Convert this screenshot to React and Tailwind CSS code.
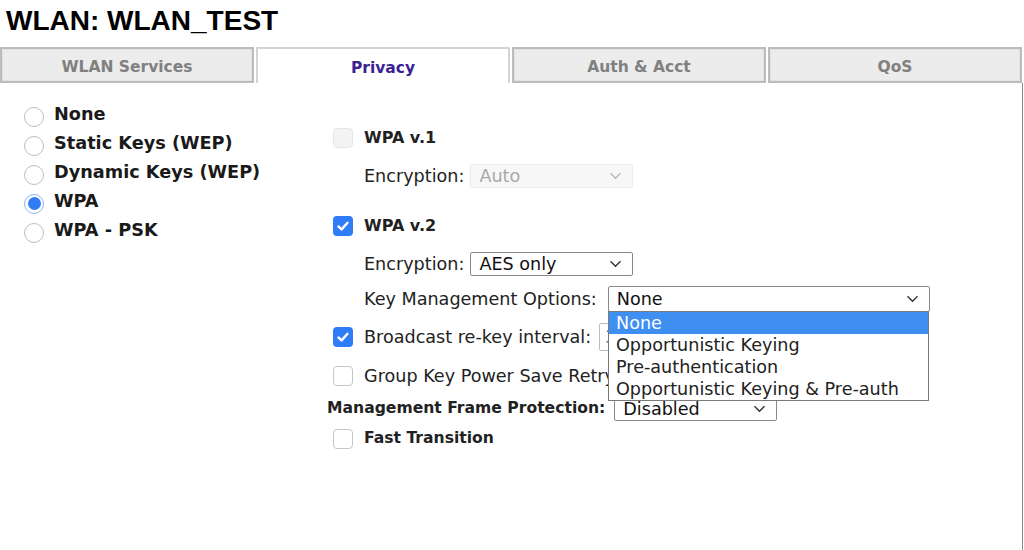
import React from "react";

const Chevron = ({ className = "" }) => (
  <svg viewBox="0 0 12 8" className={`w-[13px] h-[8px] ${className}`} fill="none" stroke="currentColor" strokeWidth="1.4">
    <path d="M1 1.2 L6 6.2 L11 1.2" />
  </svg>
);

const Radio = ({ checked }) =>
  checked ? (
    <span className="block w-[20px] h-[20px] rounded-full border border-[#8fb4f5] bg-white flex items-center justify-center shrink-0">
      <span className="block w-[13px] h-[13px] rounded-full bg-[#2f7cf6]" />
    </span>
  ) : (
    <span className="block w-[20px] h-[20px] rounded-full border border-[#bdbdbd] bg-white shrink-0" />
  );

const Checkbox = ({ checked, disabled }) => {
  if (checked)
    return (
      <span className="w-[20px] h-[20px] rounded-[4px] bg-[#2f7cf6] flex items-center justify-center shrink-0">
        <svg viewBox="0 0 14 14" className="w-[14px] h-[14px]" fill="none" stroke="white" strokeWidth="2.4" strokeLinecap="round" strokeLinejoin="round">
          <path d="M2.5 7.5 L5.6 10.4 L11.5 3.8" />
        </svg>
      </span>
    );
  if (disabled) return <span className="block w-[20px] h-[20px] rounded-[4px] border border-[#e6e6e6] bg-[#f3f3f3] shrink-0" />;
  return <span className="block w-[20px] h-[20px] rounded-[4px] border border-[#c6c6c6] bg-white shrink-0" />;
};

const Select = ({ value, width, disabled, height = "h-[24px]" }) => (
  <div
    className={`${width} ${height} shrink-0 flex items-center justify-between pl-[8px] pr-[10px] rounded-[2px] border ${
      disabled ? "border-[#ececec] bg-[#f7f7f7] text-[#a8a8a8]" : "border-[#8a8a8a] bg-white text-[#111]"
    }`}
  >
    <span>{value}</span>
    <Chevron className={disabled ? "text-[#b8b8b8]" : "text-[#333]"} />
  </div>
);

const tabs = ["WLAN Services", "Privacy", "Auth & Acct", "QoS"];

const privacyModes = [
  { label: "None" },
  { label: "Static Keys (WEP)" },
  { label: "Dynamic Keys (WEP)" },
  { label: "WPA", checked: true },
  { label: "WPA - PSK" },
];

const keyOptions = ["None", "Opportunistic Keying", "Pre-authentication", "Opportunistic Keying & Pre-auth"];

export default function App() {
  return (
    <div className="w-[1024px] h-[550px] bg-white overflow-hidden flex flex-col font-['DejaVu_Sans',Verdana,sans-serif] text-[17.6px] text-[#222]">
      {/* Title */}
      <h1 className="h-[47px] pl-[6px] pt-[5px] font-['Liberation_Sans',Arial,sans-serif] font-bold text-[28px] leading-[32px] text-black">
        WLAN: WLAN_TEST
      </h1>

      {/* Tabs */}
      <div className="flex gap-[2px] pr-[2px] h-[36px]">
        {tabs.map((t) => {
          const active = t === "Privacy";
          return (
            <div
              key={t}
              className={`flex-1 flex items-center justify-center pt-[5px] font-bold text-[15.5px] border-2 ${
                active
                  ? "bg-white border-[#d4d4d4] border-b-0 text-[#3d1f94]"
                  : "bg-[#ececec] border-[#bcbcbc] text-[#808080] shadow-[inset_0_0_0_1px_#e2e2e2]"
              }`}
            >
              {t}
            </div>
          );
        })}
      </div>

      {/* Panel */}
      <div className="flex-1 flex border-r border-[#8c8c8c] mr-[1px]">
        {/* Left: privacy mode */}
        <div className="w-[327px] pl-[24px] pt-[17px] flex flex-col font-bold text-[17.7px]">
          {privacyModes.map((m) => (
            <div key={m.label} className="h-[29px] flex items-center gap-[10px]">
              <span className="mt-[4px]">
                <Radio checked={m.checked} />
              </span>
              <span className="text-[#1a1a1a]">{m.label}</span>
            </div>
          ))}
        </div>

        {/* Right: WPA settings */}
        <div className="relative flex-1 flex flex-col pt-[40px]">
          <div className="h-[30px] flex items-center gap-[11px] pl-[6px]">
            <Checkbox disabled />
            <span className="font-bold text-[16px]">WPA v.1</span>
          </div>
          <div className="mt-[11px] h-[24px] flex items-center gap-[6px] pl-[37px]">
            <span>Encryption:</span>
            <Select value="Auto" width="w-[163px]" disabled />
          </div>

          <div className="mt-[25px] h-[26px] flex items-center gap-[11px] pl-[6px]">
            <Checkbox checked />
            <span className="font-bold text-[16px]">WPA v.2</span>
          </div>
          <div className="mt-[13px] h-[24px] flex items-center gap-[6px] pl-[37px]">
            <span>Encryption:</span>
            <Select value="AES only" width="w-[163px]" />
          </div>

          <div className="mt-[10px] h-[26px] flex items-center gap-[11px] pl-[37px]">
            <span>Key Management Options:</span>
            <Select value="None" width="w-[322px]" height="h-[26px]" />
          </div>

          {/* rows partly covered by the open list are clipped where it begins */}
          <div className="mt-[11px] w-[281px] overflow-hidden h-[28px] flex items-center pl-[6px] whitespace-nowrap">
            <Checkbox checked />
            <span className="ml-[11px]">Broadcast re-key interval:</span>
            <div className="ml-[8px] w-[70px] h-[28px] shrink-0 border border-[#bcbcbc] rounded-[2px] pl-[5px] flex items-center text-[#555]">
              3600
            </div>
          </div>

          <div className="mt-[12px] w-[281px] overflow-hidden h-[26px] flex items-center pl-[6px] whitespace-nowrap">
            <Checkbox />
            <span className="ml-[11px]">Group Key Power Save Retry Count:</span>
          </div>

          <div className="mt-[8px] h-[24px] flex items-center gap-[9px]">
            <span className="font-bold text-[15.6px]">Management Frame Protection:</span>
            <Select value="Disabled" width="w-[163px]" height="h-[24px]" />
          </div>

          <div className="mt-[5px] h-[26px] flex items-center gap-[11px] pl-[6px]">
            <Checkbox />
            <span className="font-bold text-[15.6px]">Fast Transition</span>
          </div>

          {/* Open dropdown list for Key Management Options */}
          <ul className="absolute left-[281px] top-[228px] w-[321px] bg-white border border-[#7a7a7a] z-10">
            {keyOptions.map((o, i) => (
              <li
                key={o}
                className={`h-[22px] leading-[22px] pl-[7px] ${i === 0 ? "bg-[#3f8ef2] text-white" : "text-[#222]"}`}
              >
                {o}
              </li>
            ))}
          </ul>
        </div>
      </div>
    </div>
  );
}
